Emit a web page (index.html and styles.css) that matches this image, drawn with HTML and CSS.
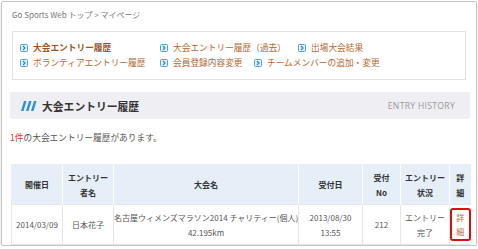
FILE: index.html
```html
<!DOCTYPE html>
<html lang="ja">
<head>
<meta charset="utf-8">
<link rel="stylesheet" href="styles.css">
</head>
<body>
<div class="frame">
  <div class="crumb">Go Sports Web トップ &gt; マイページ</div>
  <div class="nav">
    <div class="nav-row">
      <a class="nav-item c1 current"><svg class="ic" viewBox="0 0 8 8"><rect x="0.5" y="0.5" width="7" height="7" rx="1" fill="#e4f1fb" stroke="#4da0d8"/><path d="M3 2 L5 4 L3 6" fill="none" stroke="#2f86c8" stroke-width="1.2"/></svg>大会エントリー履歴</a>
      <a class="nav-item c2"><svg class="ic" viewBox="0 0 8 8"><rect x="0.5" y="0.5" width="7" height="7" rx="1" fill="#e4f1fb" stroke="#4da0d8"/><path d="M3 2 L5 4 L3 6" fill="none" stroke="#2f86c8" stroke-width="1.2"/></svg>大会エントリー履歴（過去）</a>
      <a class="nav-item"><svg class="ic" viewBox="0 0 8 8"><rect x="0.5" y="0.5" width="7" height="7" rx="1" fill="#e4f1fb" stroke="#4da0d8"/><path d="M3 2 L5 4 L3 6" fill="none" stroke="#2f86c8" stroke-width="1.2"/></svg>出場大会結果</a>
    </div>
    <div class="nav-row">
      <a class="nav-item c1"><svg class="ic" viewBox="0 0 8 8"><rect x="0.5" y="0.5" width="7" height="7" rx="1" fill="#e4f1fb" stroke="#4da0d8"/><path d="M3 2 L5 4 L3 6" fill="none" stroke="#2f86c8" stroke-width="1.2"/></svg>ボランティアエントリー履歴</a>
      <a class="nav-item c2b"><svg class="ic" viewBox="0 0 8 8"><rect x="0.5" y="0.5" width="7" height="7" rx="1" fill="#e4f1fb" stroke="#4da0d8"/><path d="M3 2 L5 4 L3 6" fill="none" stroke="#2f86c8" stroke-width="1.2"/></svg>会員登録内容変更</a>
      <a class="nav-item"><svg class="ic" viewBox="0 0 8 8"><rect x="0.5" y="0.5" width="7" height="7" rx="1" fill="#e4f1fb" stroke="#4da0d8"/><path d="M3 2 L5 4 L3 6" fill="none" stroke="#2f86c8" stroke-width="1.2"/></svg>チームメンバーの追加・変更</a>
    </div>
  </div>
  <div class="heading">
    <svg class="slashes" viewBox="0 0 16 10"><polygon points="3,0 5.5,0 2.5,10 0,10" fill="#2a93d5"/><polygon points="8,0 10.5,0 7.5,10 5,10" fill="#2a93d5"/><polygon points="13,0 15.5,0 12.5,10 10,10" fill="#2a93d5"/></svg>
    <span class="title">大会エントリー履歴</span>
    <span class="sub">ENTRY HISTORY</span>
  </div>
  <p class="count"><span class="red">1件</span>の大会エントリー履歴があります。</p>
  <table class="hist">
    <colgroup>
      <col class="w1"><col class="w2"><col class="w3"><col class="w4"><col class="w5"><col class="w6"><col class="w7">
    </colgroup>
    <thead>
      <tr>
        <th>開催日</th>
        <th>エントリー<br>者名</th>
        <th>大会名</th>
        <th>受付日</th>
        <th>受付<br>No</th>
        <th>エントリー<br>状況</th>
        <th>詳<br>細</th>
      </tr>
    </thead>
    <tbody>
      <tr>
        <td>2014/03/09</td>
        <td>日本花子</td>
        <td>名古屋ウィメンズマラソン2014 チャリティー(個人)<br>42.195km</td>
        <td>2013/08/30<br>13:55</td>
        <td>212</td>
        <td>エントリー<br>完了</td>
        <td class="detail"><a class="detail-link">詳<br>細</a></td>
      </tr>
    </tbody>
  </table>
</div>
</body>
</html>
```
FILE: styles.css
```css
html, body {
  margin: 0;
  padding: 0;
  background: #fff;
}
body {
  font-family: "Noto Sans CJK JP", "Noto Sans", sans-serif;
  color: #555;
}
.frame {
  margin: 1px 1px 0 1px;
  height: 245px;
  border: 1px solid #c4c4c4;
  border-radius: 2px;
  box-shadow: 0 1px 2px rgba(0,0,0,0.18);
  padding: 0 6px 0 8px;
  box-sizing: border-box;
  overflow: hidden;
}
.crumb {
  padding: 7px 0 0 2px;
  font-size: 8px;
  line-height: 12px;
  color: #777;
}
.nav {
  margin: 10px 4px 0 2px;
  border: 1px solid #e2e2e2;
  padding: 8px 7px 9px 7px;
}
.nav-row {
  display: flex;
  align-items: center;
  height: 15px;
}
.nav-item {
  display: flex;
  align-items: center;
  font-size: 8.7px;
  line-height: 15px;
  color: #b8672f;
  white-space: nowrap;
}
.nav-item.current {
  font-weight: bold;
  color: #a2521c;
}
.c1 { width: 140px; }
.c2 { width: 138px; }
.c2b { width: 94px; }
.ic {
  width: 8px;
  height: 8px;
  margin-right: 5px;
  flex: none;
}
.heading {
  margin-top: 12px;
  height: 27px;
  background: #eeeef3;
  border-radius: 3px;
  display: flex;
  align-items: center;
  padding: 0 15px 0 11px;
}
.slashes {
  width: 16px;
  height: 10px;
  margin-right: 5px;
}
.title {
  font-size: 10.8px;
  font-weight: bold;
  color: #333;
}
.sub {
  margin-left: auto;
  font-family: "Open Sans", "Noto Sans", sans-serif;
  font-size: 8.6px;
  color: #999;
  letter-spacing: 0.3px;
}
.count {
  margin: 12px 0 0 0;
  font-size: 8.7px;
  line-height: 14px;
  color: #555;
}
.red { color: #e4312b; }
.hist {
  margin-top: 19px;
  width: 459px;
  margin-left: 1px;
  border-collapse: collapse;
  table-layout: fixed;
  font-size: 8px;
  line-height: 15px;
  text-align: center;
}
.w1 { width: 51px; }
.w2 { width: 51px; }
.w3 { width: 185px; }
.w4 { width: 64px; }
.w5 { width: 38px; }
.w6 { width: 49px; }
.w7 { width: 21px; }
.hist th {
  background: #e6eef7;
  color: #333;
  font-weight: bold;
  height: 39px;
  padding: 0;
  border-left: 1px solid #fff;
  border-top: 1px solid #e6eef7;
}
.hist th:first-child { border-left: 1px solid #e6eef7; }
.hist td {
  height: 36px;
  padding: 0;
  border: 1px solid #e6e6e6;
  color: #555;
  white-space: nowrap;
}
.hist td.detail {
  padding: 3px 0 0 0;
  vertical-align: top;
  border-right: none;
}
.detail-link {
  display: block;
  border: 2px solid #d80f0f;
  border-radius: 3px;
  color: #b56a45;
  height: 33px;
  line-height: 14px;
  padding-top: 1px;
  box-sizing: border-box;
}
```
